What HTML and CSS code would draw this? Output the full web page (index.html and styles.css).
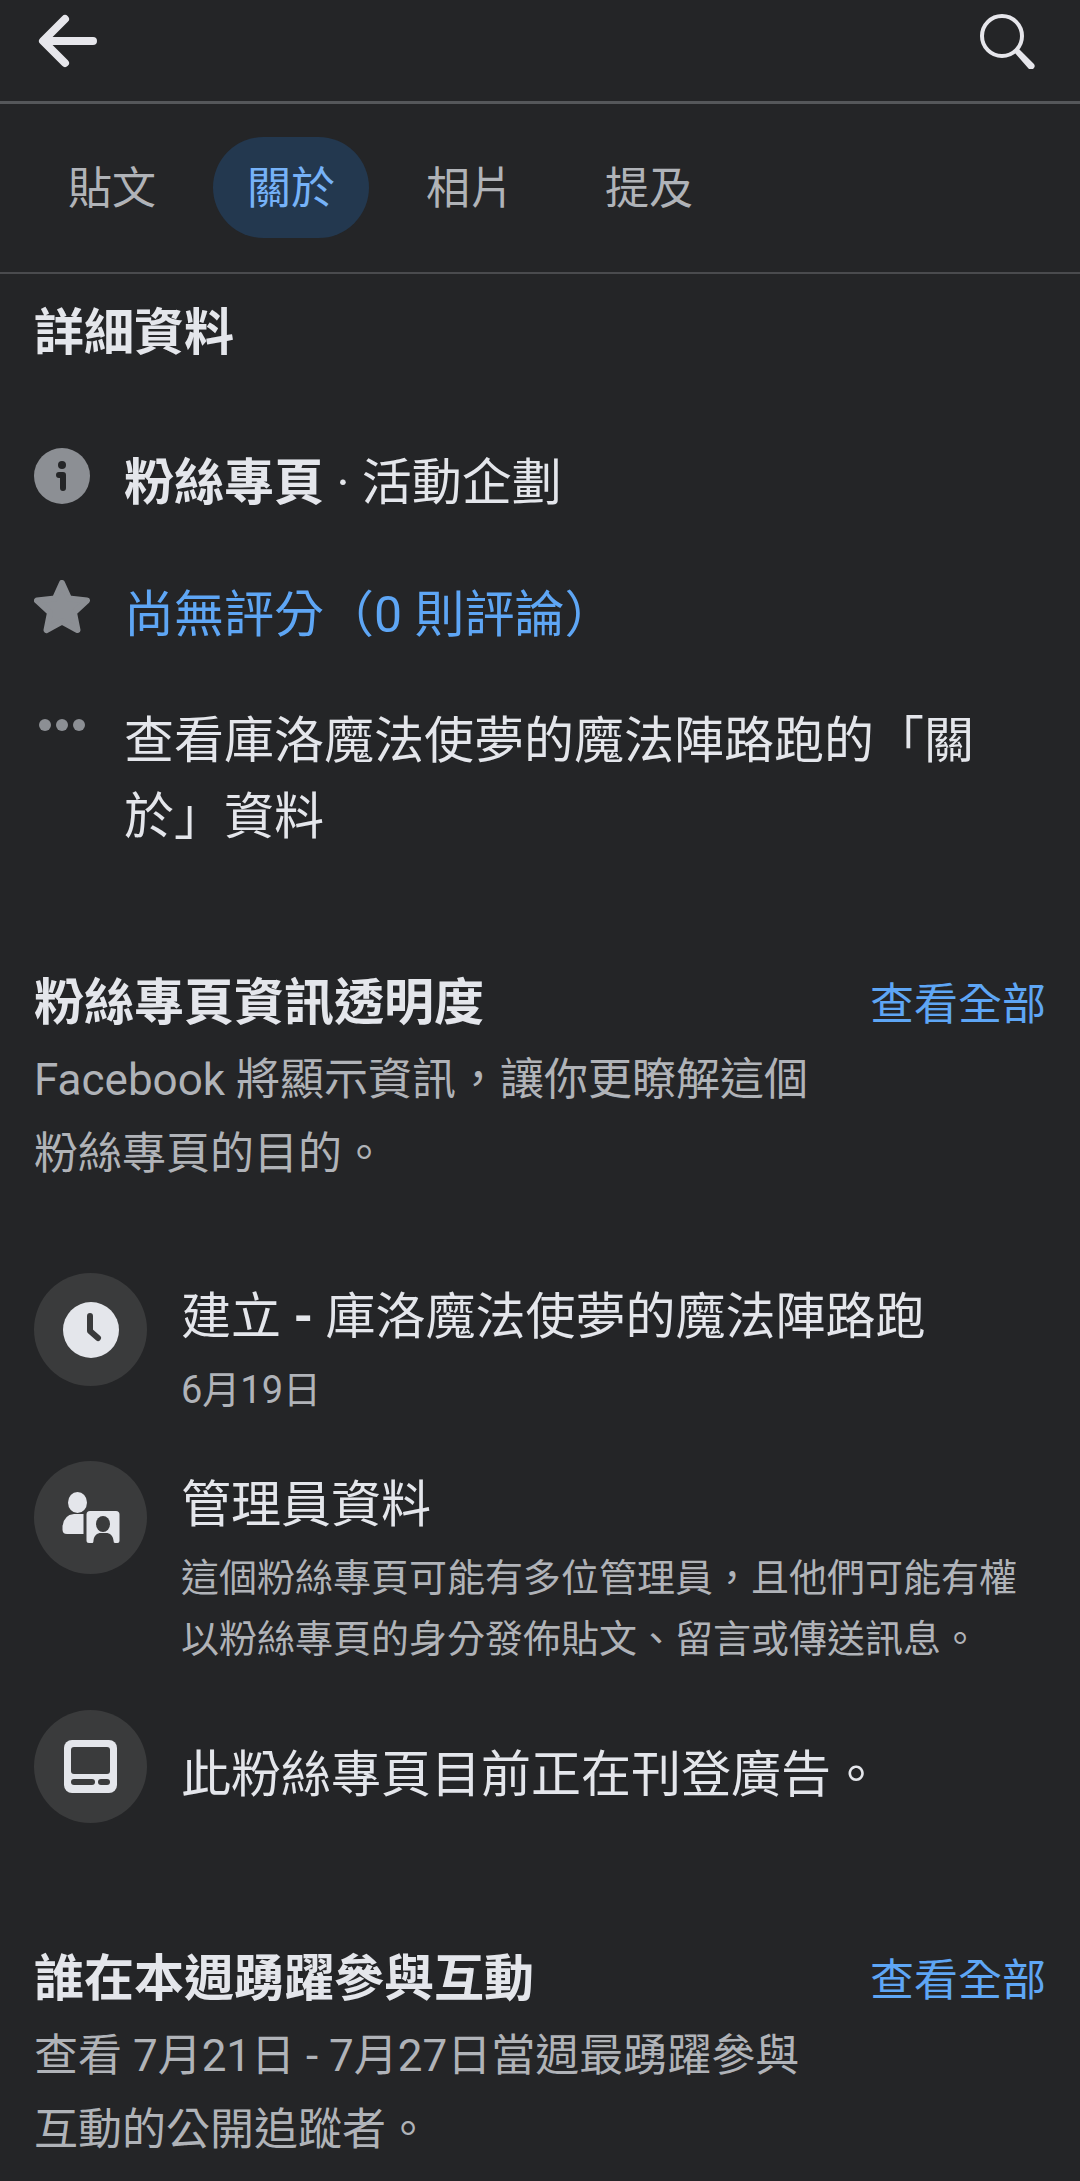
FILE: index.html
```html
<!DOCTYPE html>
<html lang="zh-Hant">
<head>
<meta charset="utf-8">
<meta name="viewport" content="width=device-width, initial-scale=1">
<title>關於</title>
<link rel="stylesheet" href="styles.css">
</head>
<body>
<header class="topbar">
  <button class="icon-button" type="button" aria-label="返回">
    <svg width="60" height="56" viewBox="0 0 60 56" aria-hidden="true"><path d="M27 6 5 28l22 22M6 28h49" fill="none" stroke="currentColor" stroke-width="8" stroke-linecap="round" stroke-linejoin="round"/></svg>
  </button>
  <button class="icon-button" type="button" aria-label="搜尋">
    <svg width="56" height="56" viewBox="0 0 56 56" aria-hidden="true"><circle cx="23" cy="23" r="20" fill="none" stroke="currentColor" stroke-width="4"/><path d="M35.500 39.500 39.500 35.500 54.500 50.500a3.500 3.500 0 0 1-5 5z" fill="currentColor"/></svg>
  </button>
</header>
<nav class="tabs">
  <a class="tab" href="#posts">貼文</a>
  <a class="tab tab-active" href="#about" aria-current="page">關於</a>
  <a class="tab" href="#photos">相片</a>
  <a class="tab" href="#mentions">提及</a>
</nav>
<main id="about">
  <section class="section section-details">
    <h2 class="heading">詳細資料</h2>
    <ul class="details">
      <li class="detail">
        <svg class="detail-icon" width="56" height="56" viewBox="0 0 56 56" aria-hidden="true"><circle cx="28" cy="28" r="28" fill="currentColor"/><circle class="cut" cx="28" cy="17" r="4"/><path class="cut-line" d="M25 27h4v13" /></svg>
        <p class="detail-text"><b>粉絲專頁</b> · 活動企劃</p>
      </li>
      <li class="detail">
        <svg class="detail-icon" width="56" height="56" viewBox="0 0 56 56" aria-hidden="true"><path d="M28 3 35 18.500 53 20.500 40 32.500 43.500 50 28 41.500 12.500 50 16 32.500 3 20.500 21 18.500z" fill="currentColor" stroke="currentColor" stroke-width="6" stroke-linejoin="round"/></svg>
        <p class="detail-text"><a class="link" href="#reviews">尚無評分（0 則評論）</a></p>
      </li>
      <li class="detail">
        <svg class="detail-icon" width="56" height="56" viewBox="0 0 56 56" aria-hidden="true"><g fill="currentColor"><circle cx="11" cy="19" r="6"/><circle cx="28" cy="19" r="6"/><circle cx="45" cy="19" r="6"/></g></svg>
        <p class="detail-text">查看庫洛魔法使夢的魔法陣路跑的「關於」資料</p>
      </li>
    </ul>
  </section>
  <section class="section section-transparency">
    <div class="section-head">
      <h2 class="heading">粉絲專頁資訊透明度</h2>
      <a class="link see-all" href="#transparency">查看全部</a>
    </div>
    <p class="summary">Facebook 將顯示資訊，讓你更瞭解這個粉絲專頁的目的。</p>
    <ul class="facts">
      <li class="fact">
        <span class="badge"><svg width="56" height="56" viewBox="0 0 56 56" aria-hidden="true"><circle cx="28" cy="28" r="28" fill="currentColor"/><path d="M27 14v15l8 7" fill="none" stroke="#3a3b3c" stroke-width="6" stroke-linecap="round" stroke-linejoin="round"/></svg></span>
        <div class="fact-body">
          <h3 class="fact-title">建立 <b class="dash">-</b> 庫洛魔法使夢的魔法陣路跑</h3>
          <p class="fact-note">6月19日</p>
        </div>
      </li>
      <li class="fact">
        <span class="badge"><svg width="58" height="58" viewBox="0 0 58 58" aria-hidden="true"><g fill="currentColor"><ellipse cx="15.500" cy="13.500" rx="9.500" ry="10.500"/><path d="M12 25h9.500v20H5q-4.500 0-4.500-4.500v-3Q1.500 26 12 25z"/><path d="M28 22h26q3.500 0 3.500 3.500V52q0 2-2 2h-2.500q-1.500 0-1.500-2.500c-.5-5-3.500-7.500-7.500-7.500h-5c-4 0-7 2.500-7.500 7.500 0 2.500-1 2.500-1.500 2.500H27q-2.500 0-2.500-2.500v-26Q24.500 22 28 22z"/></g><ellipse cx="41" cy="35" rx="7" ry="8" fill="#3a3b3c"/></svg></span>
        <div class="fact-body">
          <h3 class="fact-title">管理員資料</h3>
          <p class="fact-note">這個粉絲專頁可能有多位管理員，且他們可能有權以粉絲專頁的身分發佈貼文、留言或傳送訊息。</p>
        </div>
      </li>
      <li class="fact fact-single">
        <span class="badge"><svg width="53" height="53" viewBox="0 0 53 53" aria-hidden="true"><rect width="53" height="53" rx="8" fill="currentColor"/><g fill="#3a3b3c"><rect x="7" y="7" width="39" height="27" rx="3"/><rect x="7" y="39" width="24" height="6" rx="3"/><rect x="34" y="39" width="12" height="6" rx="3"/></g></svg></span>
        <div class="fact-body">
          <h3 class="fact-title">此粉絲專頁目前正在刊登廣告。</h3>
        </div>
      </li>
    </ul>
  </section>
  <section class="section">
    <div class="section-head">
      <h2 class="heading">誰在本週踴躍參與互動</h2>
      <a class="link see-all" href="#engagement">查看全部</a>
    </div>
    <p class="summary">查看 7月21日 - 7月27日當週最踴躍參與互動的公開追蹤者。</p>
  </section>
</main>
</body>
</html>
```
FILE: styles.css
```css
* { box-sizing: border-box; }

body {
  margin: 0;
  background: #242527;
  color: #e4e6eb;
  font-family: Roboto, "Noto Sans CJK TC", sans-serif;
  font-size: 50px;
}

h2, h3, p, ul { margin: 0; padding: 0; }
ul { list-style: none; }
svg { display: block; flex: none; }

.topbar {
  display: flex;
  justify-content: space-between;
  align-items: flex-start;
  padding: 13px 45px 32px 38px;
  border-bottom: 3px solid #55575a;
}

.icon-button {
  padding: 0;
  border: 0;
  background: none;
  color: #e6e6eb;
}

.tabs {
  display: flex;
  gap: 23px;
  padding: 33px 34px 34px;
  border-bottom: 2px solid #4a4b4e;
}

.tab {
  padding: 22px 34px 18px;
  border-radius: 51px;
  color: #b0b3b8;
  font-size: 44px;
  line-height: 61px;
  text-decoration: none;
}

.tab-active {
  background: #23384f;
  color: #76b2f8;
}

.section { padding: 0 34px 15px; }
.section-details { padding: 29px 34px 118px; }
.section-transparency { padding-bottom: 126px; }

.section-head {
  display: flex;
  justify-content: space-between;
  align-items: baseline;
}

.heading {
  font-size: 50px;
  font-weight: 700;
  line-height: 60px;
}

.link { color: #5ea6f5; text-decoration: none; }
.see-all { font-size: 44px; line-height: 60px; }

.summary {
  max-width: 78%;
  margin-top: 8px;
  color: #b0b3b8;
  font-size: 44px;
  line-height: 74px;
}

.details {
  display: flex;
  flex-direction: column;
  gap: 50px;
  margin-top: 82px;
}

.detail { display: flex; gap: 34px; }
.detail:first-child { padding-bottom: 6px; }
.detail-icon { margin-top: 3px; color: #8c8f94; }
.detail-text { line-height: 76px; }

.cut { fill: #242527; }
.cut-line {
  fill: none;
  stroke: #242527;
  stroke-width: 6;
  stroke-linecap: round;
  stroke-linejoin: round;
}

.facts {
  display: flex;
  flex-direction: column;
  gap: 40px;
  margin-top: 82px;
}

.fact { display: flex; gap: 34px; }

.badge {
  display: flex;
  flex: none;
  align-items: center;
  justify-content: center;
  width: 113px;
  height: 113px;
  border-radius: 50%;
  background: #3a3b3c;
}

.fact-body { padding-top: 14px; }
.fact-single .fact-body { padding-top: 35px; }

.fact-title {
  font-size: 50px;
  font-weight: 400;
  line-height: 60px;
}

.dash { font-weight: 700; }

.fact-note {
  margin-top: 13px;
  color: #b0b3b8;
  font-size: 38px;
  line-height: 61px;
}
```
